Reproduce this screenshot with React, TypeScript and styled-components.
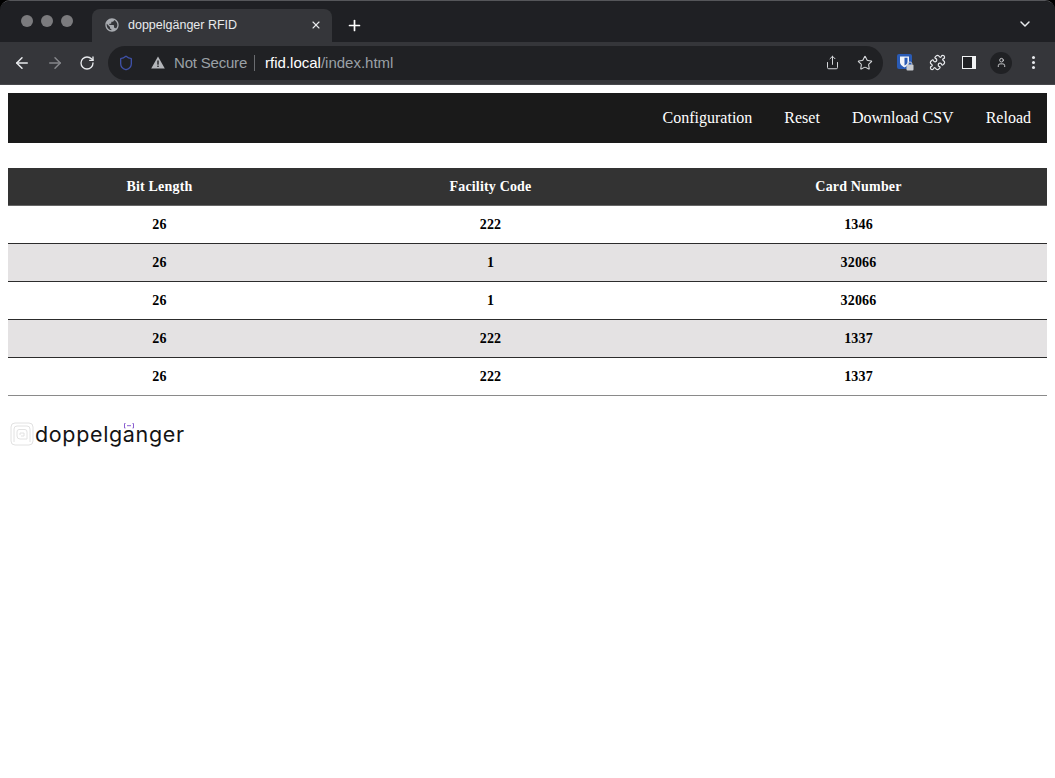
import React from "react";
import styled, { createGlobalStyle } from "styled-components";
import { ArrowLeft, ArrowRight, RotateCw, Share, Star, Puzzle, X, Plus, ChevronDown, User, Shield } from "lucide-react";
import { MdPublic } from "react-icons/md";

const Global = createGlobalStyle`
  html, body { margin: 0; padding: 0; background: #fff; }
  body { width: 1055px; height: 778px; overflow: hidden; font-family: "Liberation Serif", "Times New Roman", serif; }
`;

const Browser = styled.header`
  background: #000;
  height: 85px;
`;
const Frame = styled.div`
  height: 85px;
  border-radius: 10px 10px 0 0;
  overflow: hidden;
  box-sizing: border-box;
  border-top: 1px solid #55565a;
  display: flex;
  flex-direction: column;
`;
const TabStrip = styled.div`
  height: 41px;
  background: #1f2024;
  display: flex;
  align-items: flex-end;
  padding-left: 21px;
  flex: none;
`;
const Lights = styled.div`
  display: flex;
  gap: 8px;
  align-self: flex-start;
  margin-top: 14px;
  width: 71px;
`;
const Light = styled.span`
  width: 12px;
  height: 12px;
  border-radius: 50%;
  background: #7b7b7e;
`;
const Tab = styled.div`
  width: 240px;
  height: 33px;
  box-sizing: border-box;
  background: #35363a;
  border-radius: 8px 8px 0 0;
  display: flex;
  align-items: center;
  padding: 0 10px 1px 12px;
  color: #e8eaed;
  font: 12.5px "Liberation Sans", Arial, sans-serif;
`;
const TabTitle = styled.span`
  flex: 1;
  margin-left: 8px;
  white-space: nowrap;
`;
const NewTab = styled.div`
  margin: 0 0 0 14px;
  height: 33px;
  display: flex;
  align-items: center;
  color: #fff;
`;
const TabMenu = styled.div`
  margin-left: auto;
  margin-right: 22px;
  align-self: flex-start;
  margin-top: 15px;
  color: #e8eaed;
  display: flex;
`;
const Toolbar = styled.div`
  flex: 1;
  background: #35363a;
  display: flex;
  align-items: center;
  padding: 0 0 1px 13px;
  border-bottom: 1px solid #47484c;
`;
const NavIcons = styled.div`
  display: flex;
  align-items: center;
  gap: 15px;
  width: 95px;
  color: #e8eaed;
`;
const DimIcon = styled.span`
  display: flex;
  color: #85868a;
`;
const Omnibox = styled.div`
  width: 775px;
  height: 34px;
  border-radius: 17px;
  background: #202124;
  display: flex;
  align-items: center;
  padding: 0 10px 0 10px;
  box-sizing: border-box;
  font: 15px "Liberation Sans", Arial, sans-serif;
  color: #9aa0a6;
`;
const Secure = styled.span`
  margin-left: 9px;
  white-space: nowrap;
  letter-spacing: -0.2px;
`;
const Warning = styled.svg`
  margin-left: 17px;
  flex: none;
`;
const Divider = styled.span`
  width: 1px;
  height: 16px;
  background: #6a6c70;
  margin: 0 10px 0 7px;
`;
const Host = styled.span`
  color: #fff;
`;
const OmniActions = styled.div`
  margin-left: auto;
  display: flex;
  align-items: center;
  gap: 17px;
  color: #d5d7da;
`;
const Extensions = styled.div`
  margin-left: 6px;
  display: flex;
  align-items: center;
  color: #e8eaed;
`;
const Slot = styled.span`
  width: 32px;
  display: flex;
  align-items: center;
  justify-content: center;
`;
const PanelIcon = styled.span`
  width: 14px;
  height: 13px;
  box-sizing: border-box;
  border: 1.5px solid #f1f3f4;
  border-right-width: 4px;
  background: #202124;
`;
const Avatar = styled.span`
  width: 22px;
  height: 22px;
  border-radius: 50%;
  background: #202124;
  display: flex;
  align-items: center;
  justify-content: center;
  color: #d5d7da;
`;
const Kebab = styled.span`
  width: 3px;
  display: flex;
  flex-direction: column;
  gap: 2px;
`;
const Dot = styled.i`
  width: 3px;
  height: 3px;
  border-radius: 50%;
  background: #e8eaed;
`;

const Page = styled.main`
  padding: 8px;
`;
const Nav = styled.nav`
  height: 50px;
  background: #1a1a1a;
  display: flex;
  justify-content: flex-end;
  align-items: center;
  padding: 0 16px;
  gap: 32px;
  color: #fff;
  font-size: 16px;
`;
const Table = styled.table`
  width: 1039px;
  margin-top: 25px;
  border-collapse: collapse;
  table-layout: fixed;
  font-size: 14px;
  font-weight: bold;
  text-align: center;
  letter-spacing: 0.17px;
`;
const HeadCell = styled.th`
  height: 37px;
  padding: 0;
  background: #333;
  color: #fff;
  border-bottom: 1px solid #666;
`;
const Row = styled.tr<{ $alt: boolean }>`
  background: ${(p) => (p.$alt ? "#e4e2e3" : "#fff")};
  border-bottom: 1px solid #2c2c2c;
  &:last-child { border-bottom-color: #8a8a8a; }
`;
const Cell = styled.td`
  height: 37px;
  padding: 0;
  color: #000;
`;
const Logo = styled.div`
  margin-top: 26px;
  margin-left: 2px;
  display: flex;
  align-items: center;
  height: 24px;
  position: relative;
`;
const LogoIcon = styled.svg`
  flex: none;
`;
const LogoText = styled.span`
  font: 400 21.5px Inter, "Liberation Sans", sans-serif;
  letter-spacing: 0.65px;
  color: #141414;
  margin-left: 1px;
  line-height: 24px;
  white-space: nowrap;
`;
const LogoMark = styled.svg`
  position: absolute;
  left: 114px;
  top: 1px;
  background: #fff;
`;

const rows: [number, number, number][] = [
  [26, 222, 1346],
  [26, 1, 32066],
  [26, 1, 32066],
  [26, 222, 1337],
  [26, 222, 1337],
];

export default function App() {
  return (
    <>
      <Global />
      <Browser>
        <Frame>
          <TabStrip>
            <Lights>
              <Light />
              <Light />
              <Light />
            </Lights>
            <Tab>
              <MdPublic size={16} color="#a8abb0" />
              <TabTitle>doppelgänger RFID</TabTitle>
              <X size={12} strokeWidth={2.2} />
            </Tab>
            <NewTab>
              <Plus size={17} strokeWidth={2.4} />
            </NewTab>
            <TabMenu>
              <ChevronDown size={16} strokeWidth={2.2} />
            </TabMenu>
          </TabStrip>
          <Toolbar>
            <NavIcons>
              <ArrowLeft size={18} strokeWidth={2} />
              <DimIcon>
                <ArrowRight size={18} strokeWidth={2} />
              </DimIcon>
              <RotateCw size={16} strokeWidth={2} />
            </NavIcons>
            <Omnibox>
              <Shield size={16} color="#3f51a8" strokeWidth={2} />
              <Warning width="14" height="13" viewBox="0 0 14 13">
                <path d="M7 0.5 L13.8 12.5 H0.2 Z" fill="#b4b6ba" />
                <rect x="6.3" y="4.5" width="1.4" height="4.2" fill="#202124" />
                <rect x="6.3" y="9.6" width="1.4" height="1.4" fill="#202124" />
              </Warning>
              <Secure>Not Secure</Secure>
              <Divider />
              <Host>rfid.local</Host>
              <span>/index.html</span>
              <OmniActions>
                <Share size={15} strokeWidth={1.6} />
                <Star size={16} strokeWidth={1.6} />
              </OmniActions>
            </Omnibox>
            <Extensions>
              <Slot>
                <svg width="17" height="17" viewBox="0 0 17 17">
                  <rect x="0" y="0" width="15" height="15" rx="2" fill="#2a5bb5" />
                  <path d="M3 2.5 H12 V8 C12 11 9 12.5 7.5 13.5 C6 12.5 3 11 3 8 Z" fill="#f2f4f8" />
                  <path d="M7.5 3.8 H10.5 V8 C10.5 9.8 8.8 10.9 7.5 11.6 Z" fill="#2a5bb5" />
                  <rect x="9.5" y="10.5" width="7" height="6" rx="1" fill="#c9ccd0" />
                  <path d="M11.2 10.5 V9.3 C11.2 7.6 14.8 7.6 14.8 9.3 V10.5" fill="none" stroke="#c9ccd0" strokeWidth="1" />
                </svg>
              </Slot>
              <Slot>
                <Puzzle size={17} strokeWidth={1.7} />
              </Slot>
              <Slot>
                <PanelIcon />
              </Slot>
              <Slot>
                <Avatar>
                  <User size={11} strokeWidth={2} />
                </Avatar>
              </Slot>
              <Slot>
                <Kebab>
                  <Dot />
                  <Dot />
                  <Dot />
                </Kebab>
              </Slot>
            </Extensions>
          </Toolbar>
        </Frame>
      </Browser>
      <Page>
        <Nav>
          <span>Configuration</span>
          <span>Reset</span>
          <span>Download CSV</span>
          <span>Reload</span>
        </Nav>
        <Table>
          <colgroup>
            <col width="303" />
            <col width="359" />
            <col width="377" />
          </colgroup>
          <thead>
            <tr>
              <HeadCell>Bit Length</HeadCell>
              <HeadCell>Facility Code</HeadCell>
              <HeadCell>Card Number</HeadCell>
            </tr>
          </thead>
          <tbody>
            {rows.map((r, i) => (
              <Row key={i} $alt={i % 2 === 1}>
                <Cell>{r[0]}</Cell>
                <Cell>{r[1]}</Cell>
                <Cell>{r[2]}</Cell>
              </Row>
            ))}
          </tbody>
        </Table>
        <Logo>
          <LogoIcon width="24" height="24" viewBox="0 0 24 24" fill="none" stroke="#e2e2e2" strokeWidth="1">
            <path d="M5 1 H19 Q23 1 23 5 V19 Q23 23 19 23 H5 Q1 23 1 19 V5 Q1 1 5 1 Z" />
            <path d="M4 20 V7 Q4 4 7 4 H17 Q20 4 20 7 V20" />
            <path d="M9 7.5 H15 Q17 7.5 17 10 V17 H10 Q7 17 7 14 V10 Q7 7.5 9 7.5 Z" />
            <path d="M10 13 V11 H14 V14 H11" />
          </LogoIcon>
          <LogoText>doppelgänger</LogoText>
          <LogoMark width="10" height="6" viewBox="0 0 10 6" fill="none" stroke="#8a5fd0" strokeWidth="1">
            <path d="M1.5 0.5 H0.5 V5 H1.5 M8.5 0.5 H9.5 V5 H8.5 M3 2.7 H7" />
          </LogoMark>
        </Logo>
      </Page>
    </>
  );
}
